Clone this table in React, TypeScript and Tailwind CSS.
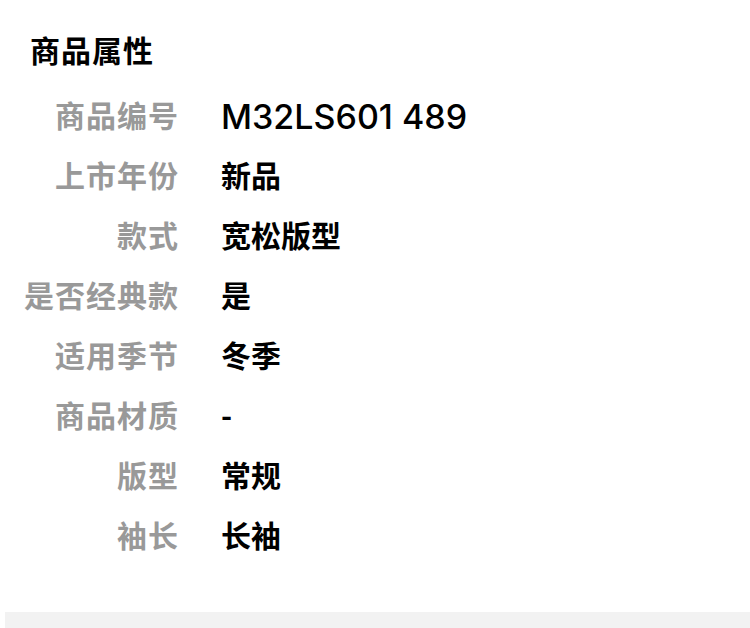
const rows: { label: string; value: string }[] = [
    { label: "商品编号", value: "M32LS601 489" },
    { label: "上市年份", value: "新品" },
    { label: "款式", value: "宽松版型" },
    { label: "是否经典款", value: "是" },
    { label: "适用季节", value: "冬季" },
    { label: "商品材质", value: "-" },
    { label: "版型", value: "常规" },
    { label: "袖长", value: "长袖" },
];

// latin-only values (codes) use a wider medium face like the reference
const isLatin = (s: string) => /^[A-Za-z0-9 ]+$/.test(s);

export default function App() {
    return (
        <div className="w-[750px] h-[628px] bg-white overflow-hidden font-['Noto_Sans_CJK_SC',sans-serif]">
            {/* Title */}
            <div className="pt-[29px] pl-[30px] h-[69px]">
                <h2 className="text-[30px] leading-[40px] font-bold text-black tracking-[1px]">商品属性</h2>
            </div>

            {/* Attribute list */}
            <div className="mt-[15px] flex flex-col">
                {rows.map((row) => (
                    <div key={row.label} className="flex items-center h-[60px]">
                        <div className="w-[179px] text-right text-[30px] font-bold text-[#999999] tracking-[1px]">
                            {row.label}
                        </div>
                        {isLatin(row.value) ? (
                            <div className="ml-[42px] pt-[6px] text-[34px] leading-[50px] font-medium text-black font-['Inter',sans-serif]">
                                {row.value}
                            </div>
                        ) : (
                            <div className="ml-[42px] text-[30px] font-bold text-black">
                                {row.value}
                            </div>
                        )}
                    </div>
                ))}
            </div>

            {/* Divider bar */}
            <div className="mt-[48px] ml-[5px] h-[16px] bg-[#f2f2f2]" />
        </div>
    );
}
